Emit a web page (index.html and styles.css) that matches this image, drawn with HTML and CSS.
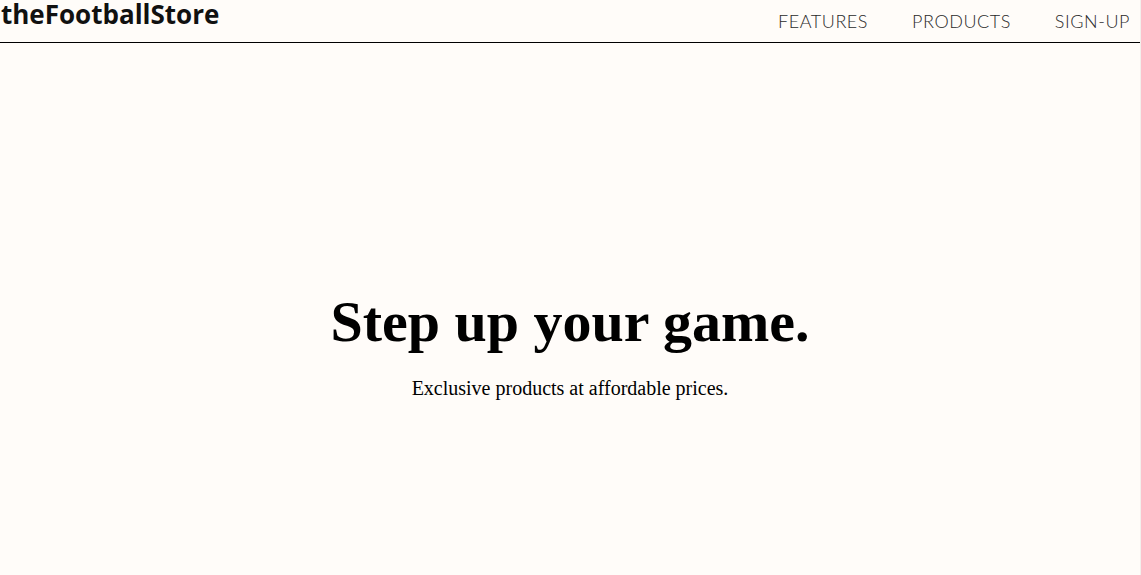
FILE: index.html
```html
<!DOCTYPE html>
<html lang="en">
<head>
<meta charset="utf-8">
<title>theFootballStore</title>
<link rel="stylesheet" href="styles.css">
</head>
<body>
<header class="header">
  <div class="logo">theFootballStore</div>
  <nav class="nav">
    <a class="nav-link" href="#features">FEATURES</a>
    <a class="nav-link" href="#products">PRODUCTS</a>
    <a class="nav-link" href="#signup">SIGN-UP</a>
  </nav>
</header>
<main class="hero">
  <h1 class="hero-title">Step up your game.</h1>
  <p class="hero-sub">Exclusive products at affordable prices.</p>
</main>
</body>
</html>
```
FILE: styles.css
```css
html, body {
  margin: 0;
  padding: 0;
  background: #fffcf9;
}
body {
  width: 1140px;
  height: 575px;
  overflow: hidden;
  border-right: 1px solid #f3f0ec;
}
.header {
  display: flex;
  justify-content: space-between;
  align-items: flex-start;
  box-sizing: border-box;
  height: 43px;
  border-bottom: 1px solid #000;
}
.logo {
  font-family: "Open Sans", sans-serif;
  font-weight: 700;
  font-size: 26px;
  line-height: 28px;
  color: #111;
  padding-left: 1px;
}
.nav {
  display: flex;
  gap: 44px;
  padding: 10px 10px 0 0;
}
.nav-link {
  font-family: "Lato", sans-serif;
  font-weight: 300;
  font-size: 18px;
  letter-spacing: 0.55px;
  color: #2a2a2a;
  text-decoration: none;
}
.hero {
  display: flex;
  flex-direction: column;
  align-items: center;
  padding-top: 243px;
}
.hero-title {
  font-family: "Liberation Serif", serif;
  font-weight: 700;
  font-size: 58px;
  line-height: 72px;
  margin: 0;
  color: #000;
}
.hero-sub {
  font-family: "Liberation Serif", serif;
  font-size: 20px;
  margin: 19px 0 0;
  color: #000;
}
```
